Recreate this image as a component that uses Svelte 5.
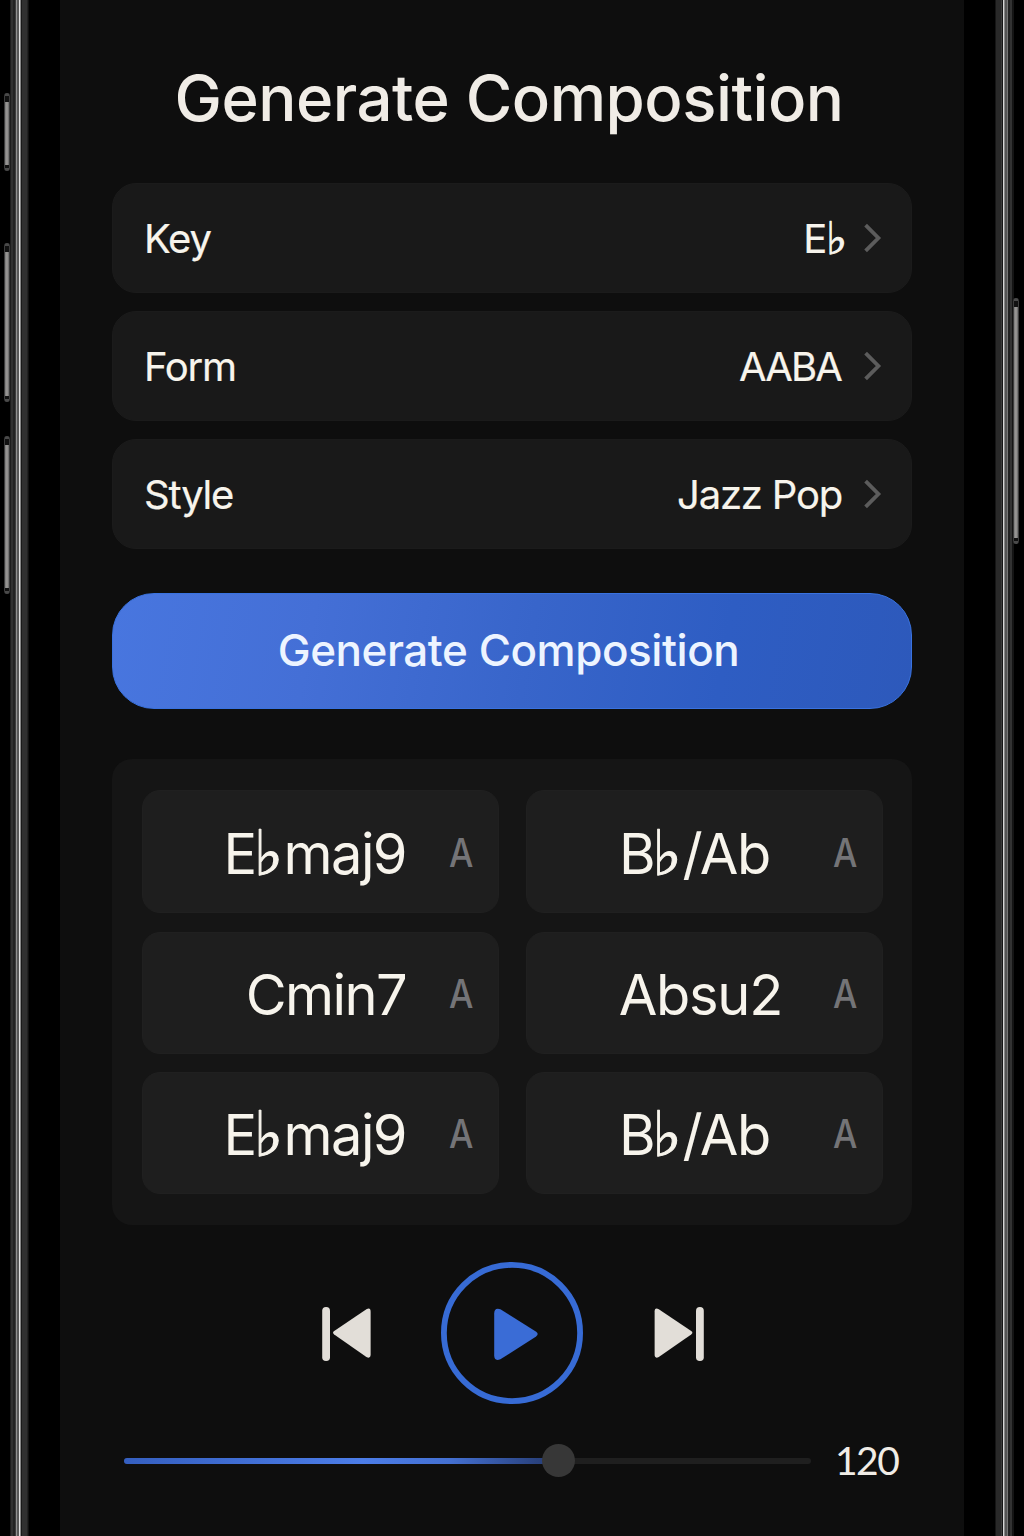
<script>
  const settings = [
    { label: 'Key', value: 'E', flat: true },
    { label: 'Form', value: 'AABA' },
    { label: 'Style', value: 'Jazz Pop' }
  ];

  const chords = [
    { root: 'E', flat: true, rest: 'maj9', kind: 'maj' },
    { root: 'B', flat: true, rest: '/Ab', kind: 'slash' },
    { root: 'Cmin7', kind: 'min' },
    { root: 'Absu2', kind: 'sus' },
    { root: 'E', flat: true, rest: 'maj9', kind: 'maj' },
    { root: 'B', flat: true, rest: '/Ab', kind: 'slash' }
  ];

  const section = 'A';
  let tempo = $state(120);
  const progress = $derived((tempo / 190) * 100);
</script>

<div class="device">
  <div class="rail left"></div>
  <i class="side action"></i>
  <i class="side up"></i>
  <i class="side down"></i>
  <main class="screen">
    <h1>Generate Composition</h1>

    <div class="settings">
      {#each settings as item}
        <button class="row">
          <span class="label">{item.label}</span>
          <span class="value {item.label.toLowerCase()}">{item.value}{#if item.flat}<span class="flat">♭</span>{/if}</span>
          <svg class="chevron" viewBox="0 0 18 30"><path d="M1.6 2.2 L14.4 15 L1.6 27.8" /></svg>
        </button>
      {/each}
    </div>

    <button class="generate"><span>Generate Composition</span></button>

    <div class="chords">
      {#each chords as chord}
        <div class="cell">
          <span class="chord {chord.kind}">{chord.root}{#if chord.flat}<span class="flat">♭</span>{chord.rest}{/if}</span>
          <span class="section">{section}</span>
        </div>
      {/each}
    </div>

    <div class="controls">
      <button class="skip" aria-label="Previous">
        <svg viewBox="0 0 50 54">
          <rect x="0.2" y="0" width="7.8" height="54" rx="3.8" />
          <path d="M44.4 2.2 Q48.6 0.2 48.6 4.6 V47.6 Q48.6 52 44.4 50 L12.2 27.4 Q9.8 25.7 12.2 24 Z" />
        </svg>
      </button>
      <button class="play" aria-label="Play">
        <svg viewBox="0 0 142 142">
          <circle cx="71" cy="71" r="68.1" />
          <path d="M53.2 51.6 Q53.2 45.2 59.4 47.2 L94.8 69.4 Q98.6 72 94.8 74.8 L59.4 97.2 Q53.2 99.6 53.2 93.6 Z" />
        </svg>
      </button>
      <button class="skip" aria-label="Next">
        <svg viewBox="0 0 50 54">
          <rect x="42" y="0" width="7.8" height="54" rx="3.8" />
          <path d="M4.8 2.2 Q0.6 0.2 0.6 4.6 V47.6 Q0.6 52 4.8 50 L37.2 27.4 Q39.6 25.7 37.2 24 Z" />
        </svg>
      </button>
    </div>

    <div class="tempo">
      <div class="track">
        <div class="fill" style="width: {progress}%"></div>
        <div class="thumb" style="left: {progress}%"></div>
      </div>
      <span class="bpm">{tempo}</span>
    </div>
  </main>
  <div class="rail right"></div>
  <i class="side power"></i>
</div>

<style>
  :global(body) {
    margin: 0;
    background: #000;
  }
  .device {
    position: relative;
    display: flex;
    box-sizing: border-box;
    width: 1024px;
    height: 1536px;
    padding: 0 10px;
    overflow: hidden;
    background: #000;
    color: #f7f4ec;
    font-family: Inter, "Liberation Sans", sans-serif;
  }
  button {
    margin: 0;
    padding: 0;
    border: 0;
    background: none;
    color: inherit;
    font: inherit;
    text-align: left;
  }
  .rail {
    width: 19px;
    flex: none;
  }
  .left {
    background: linear-gradient(90deg, #1c1c1c 0 1px, #303030 1px 3px, #222 3px 5px, #3c3c3c 5px 6px, #919191 6px 7px, #585858 7px 9px, #dedede 9px 10px, #858585 10px 11px, #191919 11px 12px, #303030 12px 17px, #222 17px 18px, #101010 18px);
  }
  .right {
    background: linear-gradient(90deg, #151515 0 1px, #292929 1px 6px, #3c3c3c 6px 7px, #151515 7px 8px, #d6d6d6 8px 9px, #888 9px 10px, #555 10px 12px, #777 12px 13px, #222 13px 15px, #333 15px 17px, #151515 17px);
  }
  .side {
    position: absolute;
    box-sizing: border-box;
    left: 4px;
    width: 5.5px;
    border: 1px solid #3c3c3c;
    border-block: 3px solid #4a4a4a;
    border-radius: 4px;
    background: linear-gradient(#111 0 6px, transparent 6px calc(100% - 3px), #111 0), linear-gradient(90deg, #777, #a09e9c, #666);
  }
  .action { top: 93px; height: 78px; }
  .up { top: 243px; height: 159px; }
  .down { top: 436px; height: 158px; }
  .power { left: 1013px; top: 298px; height: 246px; width: 6px; }

  .screen {
    box-sizing: border-box;
    display: flex;
    flex-direction: column;
    align-items: stretch;
    width: 904px;
    margin: 0 31px;
    padding: 0 52px;
    flex: none;
    background: #0e0e0e;
  }
  h1 {
    margin: 56px 6px 0 0;
    height: 127px;
    line-height: 84px;
    font-size: 63.5px;
    font-weight: 500;
    letter-spacing: -0.5px;
    color: #f0ece6;
    text-align: center;
    white-space: nowrap;
  }
  .settings {
    display: grid;
    gap: 18px;
  }
  .row {
    display: flex;
    align-items: center;
    box-sizing: border-box;
    height: 110px;
    padding: 0 29px 0 31px;
    border: 1px solid #1b1b1b;
    border-radius: 24px;
    background: #191919;
    font-size: 40px;
    line-height: 50px;
    letter-spacing: -1.2px;
    white-space: nowrap;
    -webkit-text-stroke: 0.2px currentColor;
  }
  .label, .value {
    padding-top: 2px;
  }
  .value {
    margin-left: auto;
    margin-right: 22px;
  }
  .value.form {
    letter-spacing: -1.9px;
    margin-right: 23px;
  }
  .value.key {
    margin-right: 16px;
  }
  .flat {
    margin: 0 2px 0 -2px;
    font-family: "DejaVu Serif", serif;
    font-size: 1.12em;
    line-height: 0;
    vertical-align: -0.02em;
    -webkit-text-stroke: 1px currentColor;
  }
  .key .flat {
    margin-left: 0;
  }
  .chevron {
    width: 18px;
    height: 30px;
    fill: none;
    stroke: #5c5c5c;
    stroke-width: 3.8;
  }
  .generate {
    display: flex;
    align-items: center;
    justify-content: center;
    box-sizing: border-box;
    height: 116px;
    margin-top: 44px;
    border: 1px solid #3972df;
    border-radius: 42px;
    background: linear-gradient(100deg, #4876df 0%, #446fd6 25%, #3865ca 52%, #2e5dc3 76%, #2d59bb 100%);
    color: #edf4ff;
    font-size: 44px;
    font-weight: 500;
    letter-spacing: -0.45px;
    white-space: nowrap;
  }
  .generate span {
    margin: 0 7px 2px 0;
  }
  .chords {
    display: grid;
    grid-template-columns: 357px 357px;
    grid-template-rows: 123px 122px 122px;
    gap: 18.5px 27px;
    box-sizing: border-box;
    height: 466px;
    margin-top: 50px;
    padding: 31px 29px 30px 30px;
    border-radius: 20px;
    background: #151515;
  }
  .cell {
    display: flex;
    align-items: center;
    justify-content: flex-end;
    box-sizing: border-box;
    padding-right: 25px;
    border: 1px solid #202020;
    border-radius: 18px;
    background: #1e1e1e;
    white-space: nowrap;
  }
  .chord {
    padding-top: 4px;
    font-size: 56px;
    line-height: 70px;
    letter-spacing: -1.6px;
  }
  .slash { margin-right: 20px; letter-spacing: -1.4px; }
  .sus { margin-right: 8px; letter-spacing: -1.3px; }
  .section {
    width: 24px;
    margin-left: 43px;
    padding-top: 1px;
    color: #747477;
    font-size: 40px;
    font-weight: 500;
    transform: scaleX(0.86);
    transform-origin: left;
  }
  .controls {
    display: flex;
    align-items: center;
    justify-content: center;
    gap: 70px;
    height: 142px;
    margin-top: 37px;
  }
  .skip, .skip svg {
    display: block;
    width: 50px;
    height: 54px;
  }
  .skip {
    padding-top: 1px;
    margin: 0 -1px 0 1px;
  }
  .skip svg { fill: #e2ded8; }
  .play, .play svg {
    display: block;
    width: 142px;
    height: 142px;
  }
  .play circle {
    fill: none;
    stroke: #376bd5;
    stroke-width: 5.8;
  }
  .play path { fill: #3a6cd6; }
  .tempo {
    display: flex;
    align-items: center;
    height: 60px;
    margin-top: 27px;
    padding-left: 12px;
  }
  .track {
    position: relative;
    width: 687px;
    height: 6px;
    border-radius: 3px;
    background: #1f1f1f;
  }
  .fill {
    height: 6px;
    border-radius: 3px;
    background: linear-gradient(90deg, #355fc0, #4c7de8 55%, #4470d2 75%, #2a4380 95%, #253c73);
  }
  .thumb {
    position: absolute;
    top: -14px;
    width: 33px;
    height: 33px;
    margin-left: -16.3px;
    border-radius: 50%;
    background: #373737;
  }
  .bpm {
    margin: 0 0 3px 24px;
    font-family: Lato, sans-serif;
    font-size: 39px;
    letter-spacing: -1.5px;
    color: #f0ece6;
  }
</style>
